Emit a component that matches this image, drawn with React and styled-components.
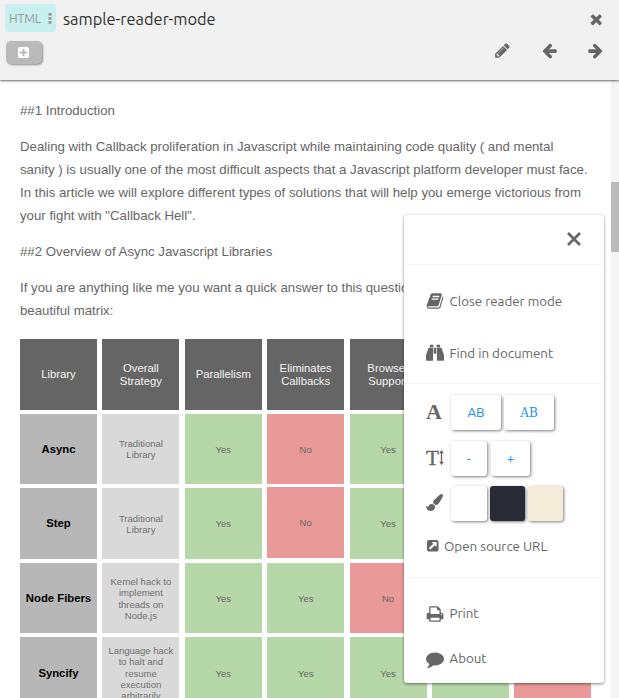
import React from 'react';
import styled, { createGlobalStyle } from 'styled-components';

const GlobalStyle = createGlobalStyle`
  * { box-sizing: border-box; }
  html, body { margin: 0; height: 100%; overflow: hidden; background: #fff; }
  #root { height: 100%; }
`;

const UI_FONT = '"Ubuntu", "Noto Sans", sans-serif';

const App_ = styled.div`
  position: relative;
  display: flex;
  flex-direction: column;
  width: 619px;
  height: 698px;
  overflow: hidden;
  color: #666;
  font-family: ${UI_FONT};
`;

const Header = styled.header`
  position: relative;
  z-index: 1;
  flex: none;
  height: 80px;
  padding: 4px 0 0 5px;
  background: #f1f1f1;
  box-shadow: 0 1px 2px rgba(0, 0, 0, 0.6);
`;

const TitleRow = styled.div`
  display: flex;
  align-items: center;
  height: 28px;
`;

const FormatTag = styled.span`
  display: flex;
  align-items: center;
  justify-content: space-between;
  width: 51px;
  height: 28px;
  padding: 0 4px;
  border-radius: 3px;
  background: #c8f0ee;
  color: #999;
  font-size: 12.4px;
  letter-spacing: -0.15px;
`;

const Title = styled.h1`
  flex: 1;
  margin: 0 0 0 7px;
  padding-top: 2px;
  color: #333;
  font-size: 16.4px;
  font-weight: 400;
  line-height: 28px;
`;

const CloseButton = styled.span`
  display: flex;
  margin-right: 15px;
  padding-top: 2px;
`;

const ToolRow = styled.div`
  display: flex;
  align-items: center;
  height: 40px;
  padding: 0 15px 0 1px;
`;

const AddButton = styled.span`
  display: flex;
  align-items: center;
  justify-content: center;
  width: 36px;
  height: 23px;
  margin-right: auto;
  padding-right: 2px;
  border-radius: 5px;
  background: #bababa;
  color: #fff;
  box-shadow: 1px 1px 2px rgba(0, 0, 0, 0.4);
`;

const Tools = styled.div`
  display: flex;
  align-items: center;
  gap: 29.5px;
  margin-top: -3px;
`;

const Body = styled.div`
  display: flex;
  flex: 1;
  min-height: 0;
`;

const Article = styled.main`
  flex: 1;
  padding: 19px 0 0 20px;
  overflow: hidden;
  font-family: "Liberation Sans", Arial, sans-serif;
`;

const Paragraph = styled.p`
  width: 585px;
  margin: 0 0 13px;
  font-size: 13.24px;
  line-height: 23px;
`;

const Matrix = styled.div`
  display: grid;
  grid-template-columns: repeat(7, 77px);
  grid-auto-rows: 70.6px;
  gap: 4px 5.4px;
  margin-top: 17px;
`;

const tones = {
  head: ['#656565', '#f3f3f3'],
  name: ['#b7b7b7', '#000'],
  plain: ['#d9d9d9', '#707070'],
  yes: ['#b6d7a8', '#666'],
  no: ['#ea9999', '#666'],
};

const Cell = styled.div`
  display: flex;
  align-items: center;
  justify-content: center;
  margin: ${(p) => (p.$raised ? '-1px 0 1px' : '0')};
  padding-top: 1px;
  background: ${(p) => tones[p.$tone][0]};
  color: ${(p) => tones[p.$tone][1]};
  font-size: ${(p) => (p.$tone === 'head' || p.$tone === 'name' ? 11.3 : 9.5)}px;
  font-weight: ${(p) => (p.$tone === 'name' ? 700 : 400)};
  line-height: ${(p) => (p.$tone === 'head' ? 13 : 11.3)}px;
  text-align: center;
  white-space: pre;
`;

const ScrollTrack = styled.div`
  width: 8px;
  padding-top: 102px;
  background: #f4f4f4;
`;

const ScrollThumb = styled.div`
  height: 70px;
  background: #bababa;
`;

const Menu = styled.aside`
  position: absolute;
  z-index: 2;
  top: 215px;
  left: 404px;
  width: 200px;
  height: 468px;
  border-radius: 3px;
  background: #fff;
  box-shadow: 0 1px 3px rgba(0, 0, 0, 0.5);
  display: flex;
  flex-direction: column;
`;

const MenuSection = styled.section`
  display: flex;
  flex-direction: column;
  height: ${(p) => p.$height}px;
  padding: ${(p) => p.$padTop || 0}px 0 0 22px;
  border-top: ${(p) => (p.$first ? 'none' : '1px solid #f4f4f4')};
`;

const MenuClose = styled.div`
  display: flex;
  justify-content: flex-end;
  padding: 17px 23px 0 0;
`;

const MenuItem = styled.div`
  display: flex;
  align-items: center;
  height: ${(p) => p.$height}px;
  font-size: 13.333px;
  white-space: nowrap;
`;

const IconSlot = styled.span`
  display: flex;
  align-items: center;
  flex: none;
  width: ${(p) => p.$width || 23.5}px;
`;

const OptionRow = styled.div`
  display: flex;
  align-items: center;
  gap: ${(p) => p.$gap}px;
  height: ${(p) => p.$height}px;
`;

const OptionIcon = styled.span`
  display: flex;
  align-items: center;
  width: 25px;
  margin-right: ${(p) => -p.$gap}px;
  padding-bottom: 2px;
`;

const OptionButton = styled.span`
  display: flex;
  align-items: center;
  justify-content: center;
  width: ${(p) => p.$width}px;
  height: 35px;
  border-radius: 3px;
  background: ${(p) => p.$color || '#fff'};
  color: #2196f3;
  font-family: ${(p) => (p.$serif ? '"DejaVu Serif", serif' : UI_FONT)};
  font-stretch: ${(p) => (p.$serif ? 'condensed' : 'normal')};
  font-size: 13.333px;
  box-shadow: 1px 1px 3px rgba(0, 0, 0, 0.5);
`;

const SerifMark = styled.span`
  font-family: "Liberation Serif", serif;
  font-size: ${(p) => p.$size}px;
  font-weight: ${(p) => p.$weight};
  line-height: 24px;
  -webkit-text-stroke: ${(p) => (p.$weight === 400 ? '0.4px currentColor' : '0')};
`;

const paths = {
  times: 'M1490 1322q0 40-28 68l-136 136q-28 28-68 28t-68-28l-294-294-294 294q-28 28-68 28t-68-28l-136-136q-28-28-28-68t28-68l294-294-294-294q-28-28-28-68t28-68l136-136q28-28 68-28t68 28l294 294 294-294q28-28 68-28t68 28l136 136q28 28 28 68t-28 68l-294 294 294 294q28 28 28 68z',
  pencil: 'M491 1536l91-91-235-235-91 91v107h128v128h107zm523-928q0-22-22-22-10 0-17 7l-542 542q-7 7-7 17 0 22 22 22 10 0 17-7l542-542q7-7 7-17zm-54-192l416 416-832 832h-416v-416zm683 96q0 53-37 90l-166 166-416-416 166-165q36-38 90-38 53 0 91 38l235 234q37 39 37 91z',
  arrow: 'M1664 896v128q0 53-32.5 90.5t-84.5 37.5h-704l293 294q38 36 38 90t-38 90l-75 76q-37 37-90 37-52 0-91-37l-651-652q-37-37-37-90 0-52 37-91l651-650q38-38 91-38 52 0 90 38l75 74q38 38 38 91t-38 91l-293 293h704q52 0 84.5 37.5t32.5 90.5z',
  plusSquare: 'M1408 960v-128q0-26-19-45t-45-19h-320v-320q0-26-19-45t-45-19h-128q-26 0-45 19t-19 45v320h-320q-26 0-45 19t-19 45v128q0 26 19 45t45 19h320v320q0 26 19 45t45 19h128q26 0 45-19t19-45v-320h320q26 0 45-19t19-45zm256-544v960q0 119-84.5 203.5t-203.5 84.5h-960q-119 0-203.5-84.5t-84.5-203.5v-960q0-119 84.5-203.5t203.5-84.5h960q119 0 203.5 84.5t84.5 203.5z',
  book: 'M1703 478q40 57 18 129l-275 906q-19 64-76.5 107.5t-122.5 43.5h-923q-77 0-148.5-53.5t-99.5-131.5q-24-67-2-127 0-4 3-27t4-37q1-8-3-21.5t-3-19.5q2-11 8-21t16.5-23.5 16.5-23.5q23-38 45-91.5t30-91.5q3-10 .5-30t-.5-28q3-11 17-28t17-23q21-36 42-92t25-90q1-9-2.5-32t.5-28q4-13 22-30.5t22-22.5q19-26 42.5-84.5t27.5-96.5q1-8-3-25.5t-2-26.5q2-8 9-18t18-23 17-21q8-12 16.5-30.5t15-35 16-36 19.5-32 26.5-23.5 36-11.5 47.5 5.5l-1 3q38-9 51-9h761q74 0 114 56t18 130l-274 906q-36 119-71.5 153.5t-128.5 34.5h-869q-27 0-38 15-11 16-1 43 24 70 144 70h923q29 0 56-15.5t35-41.5l300-987q7-22 5-57 38 15 59 43zm-1064 2q-4 13 2 22.5t20 9.5h608q13 0 25.5-9.5t16.5-22.5l21-64q4-13-2-22.5t-20-9.5h-608q-13 0-25.5 9.5t-16.5 22.5zm-83 256q-4 13 2 22.5t20 9.5h608q13 0 25.5-9.5t16.5-22.5l21-64q4-13-2-22.5t-20-9.5h-608q-13 0-25.5 9.5t-16.5 22.5z',
  binoculars: 'M704 384v1216q0 64-64 64h-576q-64 0-64-64v-512l249-681q8-23 31-23zM1024 384v576h-256v-576zM1792 1088v512q0 64-64 64h-576q-64 0-64-64v-1216h424q23 0 31 23zM736 64v256h-352v-224q0-32 32-32h288q32 0 32 32zM1408 96v224h-352v-224q0-32 32-32h288q32 0 32 32z',
  brush: 'M1615 0q70 0 122.5 46.5t52.5 116.5q0 63-45 151-332 629-465 752-97 91-218 91-126 0-216.5-92.5t-90.5-219.5q0-128 92-212l638-579q59-54 130-54zm-909 1034q39 76 106.5 130t150.5 76l1 71q4 213-129.5 347t-348.5 134q-123 0-218-46.5t-152.5-127.5-86.5-183-29-220q7 5 41 30t62 44.5 59 36.5 46 17q41 0 55-37 25-66 57.5-112.5t69.5-76 88-47.5 103-25.5 125-10.5z',
  external: 'M1408 928v-480q0-26-19-45t-45-19h-480q-42 0-59 39-17 41 14 70l144 144-534 534q-19 19-19 45t19 45l102 102q19 19 45 19t45-19l534-534 144 144q18 19 45 19 12 0 25-5 39-17 39-59zm256-512v960q0 119-84.5 203.5t-203.5 84.5h-960q-119 0-203.5-84.5t-84.5-203.5v-960q0-119 84.5-203.5t203.5-84.5h960q119 0 203.5 84.5t84.5 203.5z',
  print: 'M448 1536h896v-256h-896v256zm0-640h896v-384h-160q-40 0-68-28t-28-68v-160h-640v640zm1152 64q0-26-19-45t-45-19-45 19-19 45 19 45 45 19 45-19 19-45zm128 0v416q0 13-9.5 22.5t-22.5 9.5h-224v160q0 40-28 68t-68 28h-960q-40 0-68-28t-28-68v-160h-224q-13 0-22.5-9.5t-9.5-22.5v-416q0-79 56.5-135.5t135.5-56.5h64v-544q0-40 28-68t68-28h672q40 0 88 20t76 48l152 152q28 28 48 76t20 88v256h64q79 0 135.5 56.5t56.5 135.5z',
  comment: 'M1792 896q0 174-120 321.5t-326 233-450 85.5q-70 0-145-8-198 175-460 242-49 14-114 22-17 2-30.5-9t-17.5-29v-1q-3-4-.5-12t2-10 4.5-9.5l6-9 7-8.5 8-9q7-8 31-34.5t34.5-38 31-39.5 32.5-51 27-59 26-76q-157-89-247.5-220t-90.5-281q0-130 71-248.5t191-204.5 286-136.5 348-50.5q244 0 450 85.5t326 233 120 321.5z',
};

const Svg = styled.svg`
  display: block;
  flex: none;
  fill: currentColor;
  transform: ${(p) => (p.$flip ? 'scaleX(-1)' : 'none')};
`;

const Icon = ({ name, size, flip }) => (
  <Svg width={size} height={size} viewBox="0 0 1792 1792" $flip={flip}>
    <path d={paths[name]} />
  </Svg>
);

const DotsIcon = () => (
  <Svg width="4" height="11" viewBox="0 0 4 11">
    <path d="M.5 0h3v2.8h-3zM.5 4h3v2.8h-3zM.5 8h3v2.8h-3z" />
  </Svg>
);

const CrossIcon = () => (
  <Svg width="14" height="14" viewBox="0 0 14 14">
    <path d="M1 1L13 13M13 1L1 13" stroke="currentColor" strokeWidth="2.7" />
  </Svg>
);

const HeightArrow = () => (
  <Svg width="5" height="15" viewBox="0 0 5 16">
    <path d="M2.5 0L5 3.5H3.2v9H5L2.5 16 0 12.5h1.8v-9H0z" />
  </Svg>
);

const rows = [
  [['head', 'Library'], ['head', 'Overall\nStrategy'], ['head', 'Parallelism'], ['head', 'Eliminates\nCallbacks'], ['head', 'Browser\nSupport'], ['head', ''], ['head', '']],
  [['name', 'Async'], ['plain', 'Traditional\nLibrary'], ['yes', 'Yes'], ['no', 'No'], ['yes', 'Yes'], ['yes', ''], ['yes', '']],
  [['name', 'Step'], ['plain', 'Traditional\nLibrary'], ['yes', 'Yes'], ['no', 'No', true], ['yes', 'Yes'], ['yes', ''], ['yes', '']],
  [['name', 'Node Fibers'], ['plain', 'Kernel hack to\nimplement\nthreads on\nNode.js'], ['yes', 'Yes'], ['yes', 'Yes'], ['no', 'No'], ['yes', ''], ['yes', '']],
  [['name', 'Syncify'], ['plain', 'Language hack\nto halt and\nresume\nexecution\narbitrarily'], ['yes', 'Yes'], ['yes', 'Yes'], ['yes', 'Yes'], ['yes', ''], ['no', '']],
];

export default function App() {
  return (
    <App_>
      <GlobalStyle />
      <Header>
        <TitleRow>
          <FormatTag>HTML<DotsIcon /></FormatTag>
          <Title>sample-reader-mode</Title>
          <CloseButton><Icon name="times" size={16.5} /></CloseButton>
        </TitleRow>
        <ToolRow>
          <AddButton><Icon name="plusSquare" size={13} /></AddButton>
          <Tools>
            <Icon name="pencil" size={17} />
            <Icon name="arrow" size={17} />
            <Icon name="arrow" size={17} flip />
          </Tools>
        </ToolRow>
      </Header>
      <Body>
        <Article>
          <Paragraph>##1 Introduction</Paragraph>
          <Paragraph>
            Dealing with Callback proliferation in Javascript while maintaining code quality ( and mental<br />
            sanity ) is usually one of the most difficult aspects that a Javascript platform developer must face.<br />
            In this article we will explore different types of solutions that will help you emerge victorious from<br />
            your fight with "Callback Hell".
          </Paragraph>
          <Paragraph>##2 Overview of Async Javascript Libraries</Paragraph>
          <Paragraph>
            If you are anything like me you want a quick answer to this question in a<br />
            beautiful matrix:
          </Paragraph>
          <Matrix>
            {rows.flatMap((row, r) =>
              row.map(([tone, text, raised], c) => (
                <Cell key={`${r}-${c}`} $tone={tone} $raised={raised}>{text}</Cell>
              ))
            )}
          </Matrix>
        </Article>
        <ScrollTrack><ScrollThumb /></ScrollTrack>
      </Body>
      <Menu>
        <MenuSection $first $height={49}>
          <MenuClose><CrossIcon /></MenuClose>
        </MenuSection>
        <MenuSection $height={119} $padTop={10}>
          <MenuItem $height={52}><IconSlot><Icon name="book" size={18} /></IconSlot>Close reader mode</MenuItem>
          <MenuItem $height={52}><IconSlot><Icon name="binoculars" size={18} /></IconSlot>Find in document</MenuItem>
        </MenuSection>
        <MenuSection $height={194} $padTop={5}>
          <OptionRow $height={47} $gap={3}>
            <OptionIcon $gap={3}><SerifMark $weight={700} $size={22}>A</SerifMark></OptionIcon>
            <OptionButton $width={50}>AB</OptionButton>
            <OptionButton $width={50} $serif>AB</OptionButton>
          </OptionRow>
          <OptionRow $height={45} $gap={4}>
            <OptionIcon $gap={4}><SerifMark $weight={400} $size={21}>T</SerifMark><HeightArrow /></OptionIcon>
            <OptionButton $width={36}>-</OptionButton>
            <OptionButton $width={39}>+</OptionButton>
          </OptionRow>
          <OptionRow $height={44} $gap={3}>
            <OptionIcon $gap={3}><Icon name="brush" size={17} /></OptionIcon>
            <OptionButton $width={36} />
            <OptionButton $width={35} $color="#282a36" />
            <OptionButton $width={35} $color="#f4ecd8" />
          </OptionRow>
          <MenuItem $height={42}><IconSlot $width={18}><Icon name="external" size={13.5} /></IconSlot>Open source URL</MenuItem>
        </MenuSection>
        <MenuSection $height={106} $padTop={13}>
          <MenuItem $height={45}><IconSlot><Icon name="print" size={18} /></IconSlot>Print</MenuItem>
          <MenuItem $height={45}><IconSlot><Icon name="comment" size={18} /></IconSlot>About</MenuItem>
        </MenuSection>
      </Menu>
    </App_>
  );
}
